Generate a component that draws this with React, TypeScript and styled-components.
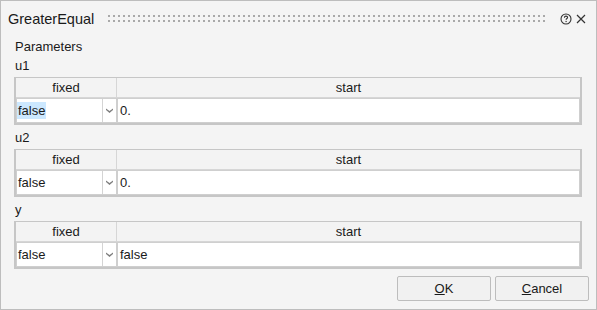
import React from 'react'
import styled, { createGlobalStyle } from 'styled-components'

const GlobalStyle = createGlobalStyle`
    html, body {
        margin: 0;
        padding: 0;
        background: #f4f4f4;
    }
    body {
        font-family: 'Liberation Sans', Arial, sans-serif;
        color: #1a1a1a;
    }
`

type Param = { name: string; fixed: string; start: string; highlight?: boolean }

const params: Param[] = [
    { name: 'u1', fixed: 'false', start: '0.', highlight: true },
    { name: 'u2', fixed: 'false', start: '0.' },
    { name: 'y', fixed: 'false', start: 'false' },
]

const App = () => {
    return (
        <>
            <GlobalStyle />
            <Dialog>
                <TitleBar>
                    <Title>GreaterEqual</Title>
                    <Grip />
                    <TitleIcons>
                        <svg width="12" height="12" viewBox="0 0 12 12">
                            <circle cx="6" cy="6" r="5" fill="none" stroke="#333" strokeWidth="1.1" />
                            <path
                                d="M4.4 4.7 C4.4 3.6 5.1 3.1 6 3.1 C6.9 3.1 7.6 3.7 7.6 4.5 C7.6 5.5 6.1 5.6 6.1 6.8"
                                fill="none"
                                stroke="#333"
                                strokeWidth="1.1"
                            />
                            <rect x="5.5" y="7.9" width="1.2" height="1.2" fill="#333" />
                        </svg>
                        <svg width="10" height="10" viewBox="0 0 10 10">
                            <path d="M1 1 L9 9 M9 1 L1 9" stroke="#333" strokeWidth="1.2" />
                        </svg>
                    </TitleIcons>
                </TitleBar>
                <Content>
                    <Label>Parameters</Label>
                    {params.map((p, i) => (
                        <Section key={p.name} $first={i === 0}>
                            <Label>{p.name}</Label>
                            <Table>
                                <HeadCell>fixed</HeadCell>
                                <HeadCell $last>start</HeadCell>
                                <SelectCell>
                                    <SelectValue>
                                        <ValueText $highlight={p.highlight}>{p.fixed}</ValueText>
                                    </SelectValue>
                                    <SelectArrow>
                                        <svg width="7" height="5" viewBox="0 0 7 5">
                                            <path d="M0 0.4 L3.5 3 L7 0.4 L7 2 L3.5 5 L0 2 Z" fill="#7e7e7e" />
                                        </svg>
                                    </SelectArrow>
                                </SelectCell>
                                <InputCell>{p.start}</InputCell>
                            </Table>
                        </Section>
                    ))}
                </Content>
                <Footer>
                    <Button>
                        <u>O</u>K
                    </Button>
                    <Button>
                        <u>C</u>ancel
                    </Button>
                </Footer>
            </Dialog>
        </>
    )
}

export default App

const Dialog = styled.div`
    box-sizing: border-box;
    width: 597px;
    height: 310px;
    border: 1px solid #bdbdbd;
    background: #f4f4f4;
    display: flex;
    flex-direction: column;
`

const TitleBar = styled.div`
    height: 36px;
    display: flex;
    align-items: center;
    padding: 0 10px 0 7px;
`

const Title = styled.span`
    font-size: 14.5px;
    color: #1a1a1a;
`

const Grip = styled.div`
    flex: 1;
    height: 7px;
    margin: -1px 0 0 14px;
    max-width: 438px;
    background-color: #a9a9a9;
    background-image: linear-gradient(90deg, transparent 2px, #f4f4f4 2px),
        linear-gradient(transparent 2px, #f4f4f4 2px);
    background-size: 5px 5px;
`

const TitleIcons = styled.div`
    margin-left: auto;
    display: flex;
    align-items: center;
    gap: 4px;
`

const Content = styled.div`
    flex: 1;
    padding: 0 13px 0 13px;
    display: flex;
    flex-direction: column;
`

const Label = styled.div`
    font-size: 13px;
    line-height: 19px;
    padding-left: 1px;
`

const Section = styled.div<{ $first?: boolean }>`
    margin-top: ${(p) => (p.$first ? '0' : '3px')};
    display: flex;
    flex-direction: column;
    gap: 2px;
`

const Table = styled.div`
    display: grid;
    grid-template-columns: 101px 1fr;
    grid-template-rows: 20px 25px;
    border: 2px solid #c6c6c6;
    border-top-width: 1px;
    margin-right: 1px;
    font-size: 13px;
`

const HeadCell = styled.div<{ $last?: boolean }>`
    background: #f3f3f3;
    display: flex;
    align-items: center;
    justify-content: center;
    border-right: ${(p) => (p.$last ? 'none' : '1px solid #d6d6d6')};
    border-bottom: 1px solid #d6d6d6;
`

const SelectCell = styled.div`
    display: flex;
    background: #fff;
    border: 1px solid #cfcfcf;
    border-right: 2px solid #cfcfcf;
    margin-right: -1px;
`

const SelectValue = styled.div`
    flex: 1;
    display: flex;
    align-items: center;
    border-right: 1px solid #d4d4d4;
`

const ValueText = styled.span<{ $highlight?: boolean }>`
    background: ${(p) => (p.$highlight ? '#cce8ff' : 'transparent')};
    padding: 1px 1px;
`

const SelectArrow = styled.div`
    width: 13px;
    display: flex;
    align-items: center;
    justify-content: center;
`

const InputCell = styled.div`
    background: #fff;
    border: 1px solid #cfcfcf;
    display: flex;
    align-items: center;
    padding-left: 2px;
`

const Footer = styled.div`
    display: flex;
    justify-content: flex-end;
    gap: 4px;
    padding: 0 7px 8px 0;
`

const Button = styled.button`
    width: 94px;
    height: 25px;
    border: 1px solid #bdbdbd;
    border-radius: 2px;
    background: #f1f1f1;
    font-family: 'Liberation Sans', Arial, sans-serif;
    font-size: 13px;
    color: #1a1a1a;
    padding: 0;
`
